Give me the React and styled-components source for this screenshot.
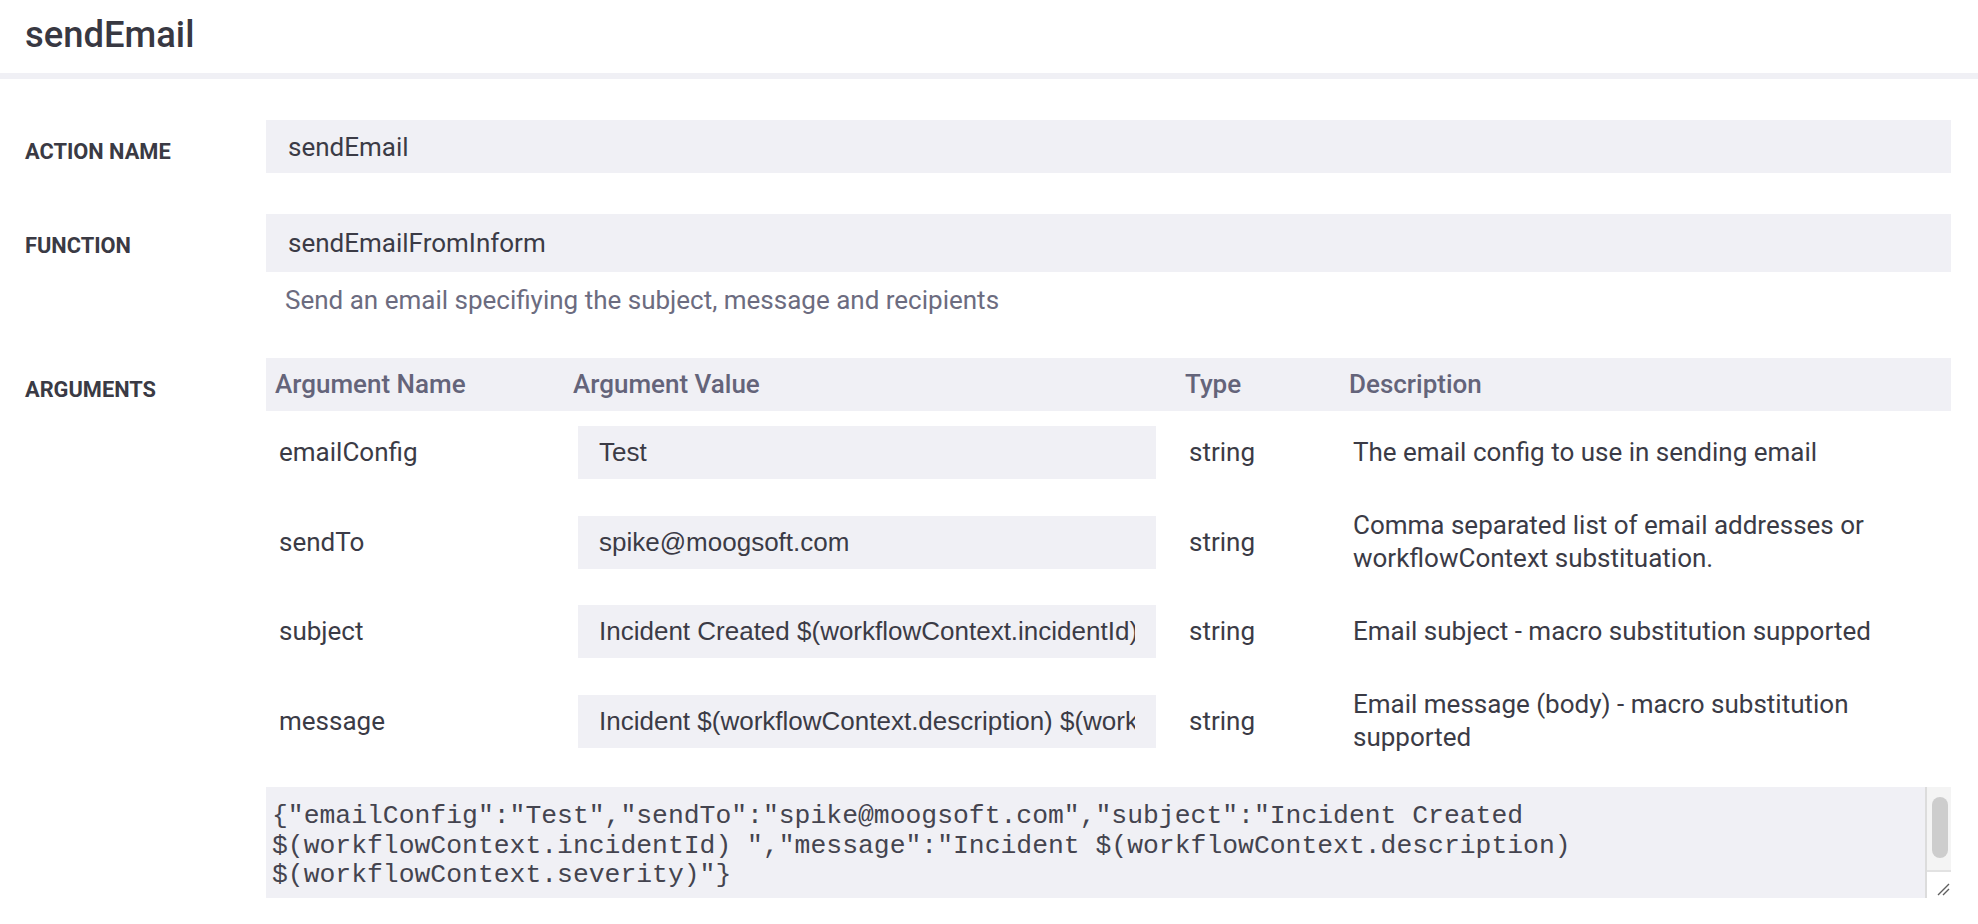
import React from 'react';
import styled, { createGlobalStyle } from 'styled-components';

const GlobalStyle = createGlobalStyle`
  html, body { margin: 0; padding: 0; background: #ffffff; }
  body {
    font-family: Roboto, "Liberation Sans", Arial, sans-serif;
    color: #3b3b46;
  }
  * { box-sizing: border-box; }
`;

const Header = styled.header`
  height: 79px;
  padding: 0 25px 4px;
  display: flex;
  align-items: center;
  border-bottom: 6px solid #f0f0f5;
`;

const Title = styled.h1`
  margin: 0;
  font-size: 36.4px;
  font-weight: 500;
  color: #383842;
`;

const Form = styled.main`
  padding: 41px 27px 0 25px;
  display: flex;
  flex-direction: column;
`;

const Section = styled.section`
  display: grid;
  grid-template-columns: 241px 1fr;
  align-items: start;
  margin-bottom: ${(p) => p.$gap || 0}px;
`;

const Label = styled.div`
  height: 58px;
  padding-top: 6px;
  line-height: 52px;
  font-size: 21.8px;
  font-weight: 700;
  text-transform: uppercase;
  color: #3a3a44;
`;

const Field = styled.input`
  display: block;
  width: 100%;
  height: ${(p) => p.$h || 53}px;
  padding: 0 22px;
  border: none;
  outline: none;
  background: #f0f0f5;
  font-family: Roboto, "Liberation Sans", Arial, sans-serif;
  font-size: 26px;
  color: #3b3b46;
`;

const Help = styled.div`
  margin-top: 13px;
  padding-left: 19px;
  line-height: 30px;
  font-size: 26px;
  color: #6c6c80;
`;

const Table = styled.div`
  display: grid;
  grid-template-columns: 298px 612px 164px 1fr;
`;

const HeadCell = styled.div`
  height: 53px;
  line-height: 53px;
  padding-left: 9px;
  background: #f0f0f5;
  font-size: 26px;
  font-weight: 500;
  color: #64647a;
`;

const Cell = styled.div`
  display: flex;
  align-items: center;
  padding: 15px 13px;
  font-size: 26px;
  line-height: 33px;
  color: #3b3b46;
`;

const ValueCell = styled(Cell)`
  padding: 15px 20px 15px 14px;
`;

const ValueInput = styled.input`
  width: 578px;
  height: 53px;
  padding: 0 21px;
  border: none;
  outline: none;
  background: #f0f0f5;
  font-family: "Liberation Sans", Arial, sans-serif;
  font-size: 26px;
  color: #3b3b46;
`;

const JsonBox = styled.div`
  display: flex;
  height: 111px;
  margin-top: 18px;
  background: #f0f0f5;
`;

const JsonArea = styled.textarea`
  flex: 1;
  min-width: 0;
  height: 100%;
  padding: 15px 8px 14px 6px;
  border: none;
  outline: none;
  resize: none;
  overflow: hidden;
  background: transparent;
  color: #44444f;
  font-family: "Liberation Mono", "Courier New", monospace;
  font-size: 26.4px;
  line-height: 29.7px;
`;

const Rail = styled.div`
  width: 26px;
  display: flex;
  flex-direction: column;
  border-left: 2px solid #dcdcdc;
`;

const Track = styled.div`
  flex: 1;
  padding: 10px 3px 0 5px;
  background: #f4f4f4;
`;

const Thumb = styled.div`
  height: 61px;
  border-radius: 8px;
  background: #cdcdcd;
`;

const Corner = styled.div`
  height: 28px;
  display: flex;
  align-items: flex-end;
  justify-content: flex-end;
  padding: 0 1px 2px 0;
  background: #ffffff;
  border-top: 2px solid #e2e2e2;
`;

const args = [
  { name: 'emailConfig', value: 'Test', type: 'string', desc: 'The email config to use in sending email' },
  { name: 'sendTo', value: 'spike@moogsoft.com', type: 'string', desc: 'Comma separated list of email addresses or workflowContext substituation.' },
  { name: 'subject', value: 'Incident Created $(workflowContext.incidentId) ', type: 'string', desc: 'Email subject - macro substitution supported' },
  { name: 'message', value: 'Incident $(workflowContext.description) $(workflowContext.severity)', type: 'string', desc: 'Email message (body) - macro substitution supported' },
];

const json =
  '{"emailConfig":"Test","sendTo":"spike@moogsoft.com","subject":"Incident Created $(workflowContext.incidentId) ","message":"Incident $(workflowContext.description) $(workflowContext.severity)"}';

export default function App() {
  return (
    <>
      <GlobalStyle />
      <Header>
        <Title>sendEmail</Title>
      </Header>
      <Form>
        <Section $gap={36}>
          <Label>Action Name</Label>
          <Field readOnly value="sendEmail" />
        </Section>
        <Section $gap={43}>
          <Label>Function</Label>
          <div>
            <Field readOnly $h={58} value="sendEmailFromInform" />
            <Help>Send an email specifiying the subject, message and recipients</Help>
          </div>
        </Section>
        <Section>
          <Label>Arguments</Label>
          <div>
            <Table>
              <HeadCell>Argument Name</HeadCell>
              <HeadCell>Argument Value</HeadCell>
              <HeadCell>Type</HeadCell>
              <HeadCell>Description</HeadCell>
              {args.map((a) => (
                <React.Fragment key={a.name}>
                  <Cell>{a.name}</Cell>
                  <ValueCell>
                    <ValueInput readOnly value={a.value} />
                  </ValueCell>
                  <Cell>{a.type}</Cell>
                  <Cell>{a.desc}</Cell>
                </React.Fragment>
              ))}
            </Table>
            <JsonBox>
              <JsonArea readOnly value={json} />
              <Rail>
                <Track>
                  <Thumb />
                </Track>
                <Corner>
                  <svg width="16" height="16" viewBox="0 0 16 16">
                    <path d="M15 4 L4 15 M15 9 L9 15" stroke="#5f5f5f" strokeWidth="1.4" fill="none" />
                  </svg>
                </Corner>
              </Rail>
            </JsonBox>
          </div>
        </Section>
      </Form>
    </>
  );
}
